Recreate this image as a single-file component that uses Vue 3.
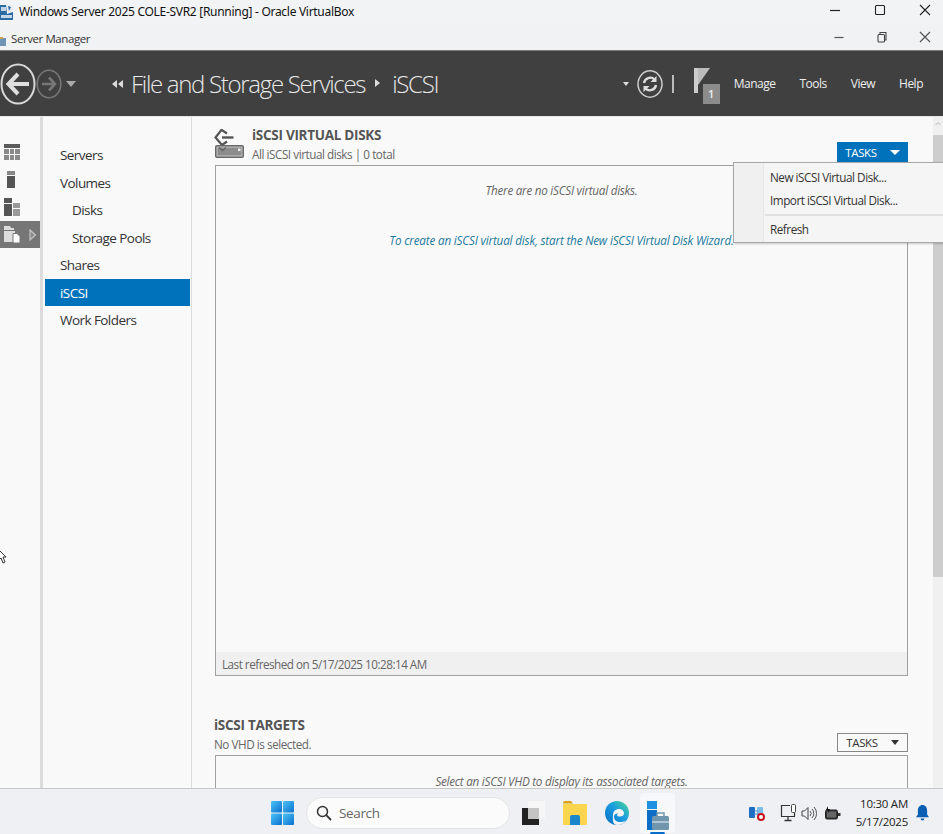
<script setup>
const nav = [
  { label: 'Servers' },
  { label: 'Volumes' },
  { label: 'Disks', sub: true },
  { label: 'Storage Pools', sub: true },
  { label: 'Shares' },
  { label: 'iSCSI', active: true },
  { label: 'Work Folders' },
]
</script>

<template>
  <div class="screen">
    <div class="titlebar">
      <svg class="vbox" width="13" height="15" viewBox="0 0 13 15">
        <rect x="0" y="0" width="13" height="15" fill="#2b6aa3" />
        <path d="M6 0h7v7L7 9z" fill="#e8eef5" />
        <path d="M1 2h5v4H1zM1 10h11v3H1z" fill="#c3d6e8" />
        <path d="M8 1l3 1-2 4z" fill="#2b6aa3" />
      </svg>
      <span class="title-text">Windows Server 2025 COLE-SVR2 [Running] - Oracle VirtualBox</span>
      <div class="win-controls outer">
        <svg width="14" height="14" viewBox="0 0 14 14"><path d="M2 7.500h10" stroke="#222" stroke-width="1.200" /></svg>
        <svg width="14" height="14" viewBox="0 0 14 14"><rect x="2.500" y="2.500" width="9" height="9" rx="1" fill="none" stroke="#222" stroke-width="1.100" /></svg>
        <svg width="14" height="14" viewBox="0 0 14 14"><path d="M2 2l10 10M12 2 2 12" stroke="#222" stroke-width="1.100" /></svg>
      </div>
    </div>
    <div class="appbar">
      <svg class="sm-mini" width="6" height="9" viewBox="0 0 6 9"><rect x="0" y="1" width="6" height="8" fill="#6e93b3" /><rect x="0" y="0" width="3" height="2" fill="#c9a24a" /></svg>
      <span class="app-name">Server Manager</span>
      <div class="win-controls inner">
        <svg width="14" height="14" viewBox="0 0 14 14"><path d="M2.500 7.500h9" stroke="#555" stroke-width="1.200" /></svg>
        <svg width="14" height="14" viewBox="0 0 14 14"><rect x="3" y="4.500" width="6.500" height="7.500" rx="1" fill="none" stroke="#444" stroke-width="1.100" /><path d="M5 4.500V2.500h6v7.500H9.500" fill="none" stroke="#444" stroke-width="1.100" /></svg>
        <svg width="14" height="14" viewBox="0 0 14 14"><path d="M2 2l10 10M12 2 2 12" stroke="#555" stroke-width="1.200" /></svg>
      </div>
    </div>

    <header class="header">
      <svg class="nav-back" width="36" height="42" viewBox="0 0 36 42">
        <ellipse cx="18" cy="21" rx="16.500" ry="19.500" fill="none" stroke="#d8d8d8" stroke-width="2" />
        <path d="M8 21h21M18 11 8.500 21l9.500 10" fill="none" stroke="#dedede" stroke-width="4" />
      </svg>
      <svg class="nav-fwd" width="26" height="30" viewBox="0 0 26 30">
        <ellipse cx="13" cy="15" rx="11.800" ry="13.800" fill="none" stroke="#777" stroke-width="1.600" />
        <path d="M6 15h13M13 8.500l6 6.500-6 6.500" fill="none" stroke="#777" stroke-width="2.600" />
      </svg>
      <span class="tri-down hist"></span>
      <span class="crumb-back">
        <i class="tri-left"></i><i class="tri-left"></i>
      </span>
      <span class="crumb">File and Storage Services</span>
      <i class="tri-right"></i>
      <span class="crumb">iSCSI</span>
      <div class="header-right">
        <span class="tri-down small"></span>
        <svg class="refresh" width="26" height="28" viewBox="0 0 26 28">
          <ellipse cx="13" cy="14" rx="12" ry="13.200" fill="none" stroke="#ccc" stroke-width="1.500" />
          <path d="M7 13a6.200 6.200 0 0 1 10.500-3.500M19 15a6.200 6.200 0 0 1-10.500 3.500" fill="none" stroke="#ddd" stroke-width="2.400" />
          <path d="M19.500 6v6h-6zM6.500 22v-6h6z" fill="#ddd" />
        </svg>
        <span class="divider"></span>
        <div class="flag">
          <svg width="16" height="26" viewBox="0 0 16 26"><rect x="0" y="0" width="4" height="25" fill="#ccc" /><path d="M4 0h12L4 17z" fill="#bbb" /></svg>
          <span class="flag-badge">1</span>
        </div>
        <nav class="menu">
          <span>Manage</span><span>Tools</span><span>View</span><span>Help</span>
        </nav>
      </div>
    </header>

    <div class="body">
      <aside class="rail">
        <div class="rail-item">
          <svg width="16" height="16" viewBox="0 0 16 16"><rect width="16" height="16" fill="#8a8a8a" /><rect width="16" height="4" fill="#5c5c5c" /><path d="M0 4.500h16M5.500 5v11M10.500 5v11M0 10.500h16" stroke="#f9f9f9" stroke-width="1" /></svg>
        </div>
        <div class="rail-item">
          <svg width="16" height="17" viewBox="0 0 16 17"><rect x="3" y="0" width="8" height="4" fill="#888" /><rect x="3" y="5" width="8" height="12" fill="#555" /></svg>
        </div>
        <div class="rail-item">
          <svg width="16" height="18" viewBox="0 0 16 18"><rect x="0" y="0" width="8" height="5" fill="#555" /><rect x="0" y="6" width="8" height="12" fill="#555" /><rect x="9" y="5" width="7" height="5" fill="#999" /><rect x="9" y="11" width="7" height="7" fill="#999" /></svg>
        </div>
        <div class="rail-item current">
          <svg width="16" height="17" viewBox="0 0 16 17"><path d="M0 0h6l1 2h3v2H0z" fill="#ddd" /><rect x="0" y="5" width="11" height="11" fill="#ddd" /><path d="M9 7.500h4l3 3v6.500H9z" fill="#fff" stroke="#767676" stroke-width="1" /></svg>
          <svg class="rail-arrow" width="8" height="12" viewBox="0 0 8 12"><path d="M1 1l5.500 5L1 11z" fill="#8c8c8c" stroke="#c4c4c4" stroke-width="1.200" /></svg>
        </div>
      </aside>
      <nav class="sidenav">
        <div v-for="item in nav" :key="item.label" class="nav-row" :class="{ sub: item.sub, active: item.active }">{{ item.label }}</div>
      </nav>

      <main class="main">
        <div class="scroll-content">
          <section class="section first">
            <div class="sec-head">
              <svg class="sec-icon" width="31" height="30" viewBox="0 0 31 30">
                <path d="M13 4.500 7.500 0.800 1.500 8.500 8 16 13 12.500" fill="none" stroke="#555" stroke-width="2.200" />
                <path d="M8 8.500H19.500" fill="none" stroke="#555" stroke-width="2.400" />
                <path d="M1 18a2 2 0 0 1 2-2h25a2 2 0 0 1 2 2v9a2 2 0 0 1-2 2H3a2 2 0 0 1-2-2z" fill="#666" />
                <rect x="3" y="18" width="25" height="9" fill="#8c8c8c" stroke="#c8c8c8" stroke-width="1" />
                <rect x="24" y="19.500" width="2.500" height="2.500" fill="#eee" />
                <path d="M5 18.500 8.500 21.500 12 18.500" fill="none" stroke="#666" stroke-width="1.400" />
              </svg>
              <div class="sec-titles">
                <h2>iSCSI VIRTUAL DISKS</h2>
                <p>All iSCSI virtual disks | 0 total</p>
              </div>
              <button class="tasks primary">TASKS <i class="tri-down white"></i></button>
            </div>
            <div class="panel tall">
              <div class="panel-body">
                <p class="empty">There are no iSCSI virtual disks.</p>
                <p class="link">To create an iSCSI virtual disk, start the New iSCSI Virtual Disk Wizard.</p>
              </div>
              <div class="panel-foot">Last refreshed on 5/17/2025 10:28:14 AM</div>
            </div>
          </section>

          <section class="section second">
            <div class="sec-head plain">
              <div class="sec-titles">
                <h2>iSCSI TARGETS</h2>
                <p>No VHD is selected.</p>
              </div>
              <button class="tasks">TASKS <i class="tri-down dark"></i></button>
            </div>
            <div class="panel short">
              <p class="empty">Select an iSCSI VHD to display its associated targets.</p>
            </div>
          </section>
        </div>
        <div class="scrollbar">
          <svg width="10" height="12" viewBox="0 0 10 12"><path d="M2.500 8 5 5.500 7.500 8" fill="none" stroke="#bbb" /></svg>
          <div class="thumb"></div>
        </div>
      </main>

      <div class="popup">
        <div class="pop-row">New iSCSI Virtual Disk...</div>
        <div class="pop-row">Import iSCSI Virtual Disk...</div>
        <div class="pop-sep"></div>
        <div class="pop-row">Refresh</div>
      </div>

      <svg class="cursor" width="8" height="18" viewBox="0 0 8 18">
        <path d="M-2 0 6 8H3l2 5-2 1-2-5-3 3z" fill="#fff" stroke="#333" stroke-width="1" />
      </svg>
    </div>

    <footer class="taskbar">
      <div class="task-center">
        <svg width="23" height="24" viewBox="0 0 23 24">
          <defs>
            <linearGradient id="win" x1="0" y1="0" x2="1" y2="1"><stop offset="0" stop-color="#4cc4f5" /><stop offset="1" stop-color="#0a70d0" /></linearGradient>
          </defs>
          <rect x="0" y="0" width="11" height="11.500" rx="1" fill="url(#win)" />
          <rect x="12" y="0" width="11" height="11.500" rx="1" fill="url(#win)" />
          <rect x="0" y="12.500" width="11" height="11.500" rx="1" fill="url(#win)" />
          <rect x="12" y="12.500" width="11" height="11.500" rx="1" fill="url(#win)" />
        </svg>
        <div class="search">
          <svg width="16" height="16" viewBox="0 0 16 16"><circle cx="6.500" cy="6.500" r="5" fill="none" stroke="#333" stroke-width="1.500" /><path d="M10.200 10.200 15 15" stroke="#333" stroke-width="1.800" /></svg>
          <span>Search</span>
        </div>
        <svg class="tv" width="24" height="24" viewBox="0 0 24 24">
          <rect x="6" y="0" width="17" height="17" fill="#f6f6f6" />
          <rect x="0" y="7" width="17" height="17" fill="#222" />
          <rect x="6" y="7" width="11" height="11" fill="#c4c4c4" />
        </svg>
        <svg class="folder" width="24" height="24" viewBox="0 0 24 24">
          <path d="M0 2a2 2 0 0 1 2-2h6l2 2.500H0z" fill="#d9a213" />
          <rect x="0" y="3" width="24" height="21" rx="1" fill="#fcd54f" />
          <path d="M7 16a2 2 0 0 1 2-2h6a2 2 0 0 1 2 2v8H7z" fill="#1b86c9" />
        </svg>
        <svg class="edge" width="24" height="24" viewBox="0 0 24 24">
          <defs>
            <linearGradient id="edgeg" x1="0" y1="1" x2="1" y2="0"><stop offset="0" stop-color="#0a6cc4" /><stop offset="0.550" stop-color="#1b9de2" /><stop offset="1" stop-color="#4fdc8a" /></linearGradient>
          </defs>
          <circle cx="12" cy="12" r="12" fill="url(#edgeg)" />
          <path d="M8 14c0-4 3-6 6-6s5 2 5 4.500c0 2-2 3-4 3-1.500 0-3-.5-3-1.500 0-.7 1-1 1.500-1.500-2.500-.5-4.500.5-4.500 3.500 0 3 3 5 6 5 2 0 4-.5 5.500-1.500-1.500 3-5 4.500-8 4.500C7 24 8 18 8 14z" fill="#f2f3f5" />
        </svg>
        <div class="sm-task">
          <svg width="22" height="30" viewBox="0 0 22 30">
            <rect x="0" y="0" width="10" height="8" fill="#1f8fe0" />
            <rect x="0" y="9" width="10" height="20" fill="#0f6fc6" />
            <rect x="5" y="15" width="17" height="14" rx="1.500" fill="#6f96ad" />
            <path d="M10 15v-3h7v3" fill="none" stroke="#6f96ad" stroke-width="1.500" />
            <path d="M5 21h17" stroke="#dce6ec" stroke-width="1.200" />
          </svg>
          <span class="running"></span>
        </div>
      </div>
      <div class="tray">
        <svg width="16" height="15" viewBox="0 0 16 15">
          <rect x="0" y="1" width="6" height="11" rx="1" fill="#1e6fc4" />
          <rect x="8" y="1" width="6" height="11" rx="1" fill="#7fbbe8" />
          <path d="M5 5h4M5 8h4" stroke="#4a8fcf" />
          <circle cx="12" cy="11" r="3" fill="#fff" stroke="#c8141c" stroke-width="2" />
        </svg>
        <svg class="net" width="16" height="18" viewBox="0 0 16 18">
          <path d="M10 1.500H1.500v11h13V9" fill="none" stroke="#333" stroke-width="1.200" />
          <path d="M8 13v3M4.500 16.500h7" stroke="#333" stroke-width="1.300" />
          <rect x="11.500" y="0.500" width="4" height="8" rx="1" fill="#fff" stroke="#444" />
        </svg>
        <svg class="vol" width="16" height="15" viewBox="0 0 16 15">
          <path d="M1 5h2.500L7 1.500v12L3.500 10H1z" fill="none" stroke="#444" />
          <path d="M9 5a3.500 3.500 0 0 1 0 5M11 3a6.500 6.500 0 0 1 0 9M13 1a9.500 9.500 0 0 1 0 13" fill="none" stroke="#555" />
        </svg>
        <svg class="bat" width="17" height="15" viewBox="0 0 17 15">
          <rect x="1.500" y="4" width="12" height="9" rx="1.500" fill="#333" stroke="#222" />
          <rect x="3" y="5.500" width="9" height="6" fill="#666" />
          <rect x="14" y="7" width="2.500" height="3" fill="#333" />
          <path d="M4 0 2 4h2v3l2-4H4z" fill="#111" />
        </svg>
        <div class="clock"><span>10:30 AM</span><span>5/17/2025</span></div>
        <svg class="bell" width="13" height="16" viewBox="0 0 14 17">
          <path d="M7 0c3 0 5 2.500 5 6v4l2 3H0l2-3V6c0-3.500 2-6 5-6z" fill="#0a5fb4" />
          <path d="M5 14.500h4a2 2 0 0 1-4 0z" fill="#0a5fb4" />
        </svg>
      </div>
    </footer>
  </div>
</template>

<style>
html, body { margin: 0; padding: 0; overflow: hidden; }
</style>

<style scoped>
.screen {
  width: 943px;
  height: 834px;
  display: flex;
  flex-direction: column;
  overflow: hidden;
  background: #f9f9f9;
  font-family: "Open Sans", "Noto Sans", sans-serif;
  color: #333;
}
.titlebar {
  height: 25px;
  flex: none;
  display: flex;
  align-items: center;
  background: #f1f3f5;
  position: relative;
}
.vbox { margin-right: 6px; flex: none; margin-top: 0; }
.title-text {
  font-family: "Noto Sans", sans-serif;
  font-size: 12px;
  color: #111;
  white-space: nowrap;
  letter-spacing: -0.29px;
  margin-top: -3px;
}
.appbar {
  height: 26px;
  flex: none;
  display: flex;
  align-items: center;
  background: #f1f2f3;
  border-bottom: 1px solid #7a7a7a;
  box-sizing: border-box;
}
.sm-mini { margin-right: 5px; margin-top: 7px; flex: none; }
.app-name { font-size: 11.500px; letter-spacing: -0.42px; color: #333; margin-top: 2px; }
.win-controls { margin-left: auto; display: flex; align-items: center; }
.win-controls.outer { gap: 31px; margin-right: 11px; margin-top: -5px; }
.win-controls.inner { gap: 29px; margin-right: 11px; margin-top: -1px; }

.header {
  height: 66px;
  flex: none;
  background: #404040;
  border-bottom: 1px solid #e8e8e8;
  box-sizing: border-box;
  display: flex;
  align-items: center;
  color: #eee;
}
.nav-back { flex: none; }
.nav-fwd { flex: none; margin-left: 0; }
.tri-down {
  display: inline-block;
  width: 0;
  height: 0;
  border-left: 5px solid transparent;
  border-right: 5px solid transparent;
  border-top: 6px solid #bbb;
}
.tri-down.hist { margin-left: 4px; border-top-color: #aaa; }
.crumb-back { display: inline-flex; margin-left: 36px; margin-right: 8px; gap: 1px; }
.tri-left {
  width: 0; height: 0;
  border-top: 4px solid transparent;
  border-bottom: 4px solid transparent;
  border-right: 5px solid #ddd;
}
.tri-right {
  width: 0; height: 0;
  border-top: 4px solid transparent;
  border-bottom: 4px solid transparent;
  border-left: 5px solid #ddd;
  margin: -2px 12px 0 10px;
}
.crumb { font-size: 24px; letter-spacing: -1.3px; font-weight: 300; color: #e8e8e8; white-space: nowrap; margin-top: -1px; }
.header-right { margin-left: auto; display: flex; align-items: center; }
.tri-down.small { border-left-width: 3.500px; border-right-width: 3.500px; border-top-width: 4px; border-top-color: #ddd; margin-right: 8px; }
.refresh { flex: none; }
.divider { width: 2px; height: 18px; background: #bbb; margin: 0 20px 0 9px; }
.flag { position: relative; width: 26px; height: 36px; margin-right: 14px; margin-top: 4px; }
.flag svg { position: absolute; left: 0; top: 0; }
.flag-badge {
  position: absolute;
  right: 0;
  bottom: 0;
  width: 17px;
  height: 20px;
  background: #8c8c8c;
  color: #eee;
  font-size: 11px;
  font-weight: 600;
  text-align: center;
  line-height: 20px;
}
.menu { display: flex; gap: 24px; margin-right: 20px; font-size: 12px; letter-spacing: -0.5px; color: #eee; }

.body { flex: 1; display: flex; min-height: 0; position: relative; background: #f9f9f9; }
.rail {
  width: 43px;
  flex: none;
  box-sizing: border-box;
  border-right: 3px solid #dcdcdc;
  padding-top: 21px;
  display: flex;
  flex-direction: column;
}
.rail-item { height: 27.500px; display: flex; align-items: center; padding-left: 4px; }
.rail-item.current { background: #767676; position: relative; width: 40px; box-sizing: border-box; }
.rail-arrow { position: absolute; left: 29px; top: 8px; }
.sidenav {
  width: 149px;
  flex: none;
  box-sizing: border-box;
  border-right: 1px solid #dcdcdc;
  padding: 24px 1px 0 2px;
}
.nav-row {
  height: 27.500px;
  line-height: 29.500px;
  padding-left: 15px;
  font-size: 13.500px;
  letter-spacing: -0.56px;
  color: #333;
  white-space: nowrap;
}
.nav-row.sub { padding-left: 27px; }
.nav-row.active { background: #0072bc; color: #fff; }
.main { flex: 1; min-width: 0; display: flex; }
.scroll-content { flex: 1; min-width: 0; padding: 0 25px 0 23px; overflow: hidden; }
.section.first { padding-top: 11px; }
.sec-head { display: flex; align-items: flex-end; height: 37px; position: relative; }
.sec-icon { position: absolute; left: -1px; top: 1px; }
.sec-titles { margin-left: 37px; }
.sec-head.plain .sec-titles { margin-left: -1px; }
.sec-titles h2 { margin: 0; font-size: 13.500px; line-height: 16px; font-weight: 700; letter-spacing: -0.28px; color: #555; }
.sec-titles p { margin: 4px 0 3px; font-size: 11.700px; line-height: 15px; letter-spacing: -0.45px; color: #666; }
.tasks {
  margin-left: auto;
  width: 71px;
  height: 19px;
  box-sizing: border-box;
  border: 1px solid #888;
  background: #f9f9f9;
  color: #333;
  font-family: inherit;
  font-size: 11.500px;
  letter-spacing: -0.35px;
  padding: 0;
  display: flex;
  align-items: center;
  justify-content: center;
  gap: 13px;
  margin-bottom: 3px;
}
.tasks.primary { background: #0072bc; border-color: #0072bc; color: #fff; height: 20px; padding-top: 1px; }
.tri-down.white { border-top-color: #fff; border-top-width: 5px; }
.tri-down.dark { border-top-color: #333; border-left-width: 4px; border-right-width: 4px; border-top-width: 5px; }
.panel { border: 1px solid #a0a0a0; box-sizing: border-box; background: #f9f9f9; }
.panel.tall { height: 511px; display: flex; flex-direction: column; }
.panel-body { flex: 1; text-align: center; padding-top: 16px; }
.empty { margin: 0; font-size: 11.700px; line-height: 16px; font-style: italic; color: #666; letter-spacing: -0.26px; text-align: center; }
.link { margin: 34px 0 0; font-size: 11.700px; line-height: 16px; font-style: italic; color: #1a7a9e; letter-spacing: -0.18px; }
.panel-foot {
  height: 23px;
  line-height: 24px;
  background: #f0f0f0;
  padding-left: 6px;
  font-size: 11.700px;
  letter-spacing: -0.5px;
  color: #666;
}
.section.second { margin-top: 40px; }
.sec-head.plain { height: 39px; }
.panel.short { height: 60px; padding-top: 17px; }
.scrollbar { width: 10px; flex: none; background: #f0f0f0; display: flex; flex-direction: column; }
.thumb { width: 10px; height: 442px; margin-top: 6px; background: #cdcdcd; }
.popup {
  position: absolute;
  left: 733px;
  top: 45px;
  width: 215px;
  height: 81px;
  box-sizing: border-box;
  border: 1px solid #a8a8a8;
  padding: 3px 0 0 32px;
  box-shadow: 1px 1px 2px rgba(0,0,0,0.2);
  background: linear-gradient(to right, #f0f0f0 29px, #e6e6e6 29px, #e6e6e6 30px, #f5f5f5 30px);
}
.pop-row { height: 23px; line-height: 23px; padding-left: 4px; font-size: 11.700px; letter-spacing: -0.46px; color: #333; white-space: nowrap; }
.pop-sep { height: 2px; background: #e0e0e0; margin: 2px 0 2px -1px; }
.cursor { position: absolute; left: 0; top: 432px; }

.taskbar {
  height: 46px;
  flex: none;
  box-sizing: border-box;
  background: #eef0f3;
  border-top: 1px solid #c8c8c8;
  position: relative;
  display: flex;
  align-items: center;
  justify-content: flex-end;
}
.task-center {
  position: absolute;
  left: 271px;
  top: 0;
  height: 48px;
  display: flex;
  align-items: center;
}
.search {
  width: 204px;
  height: 32px;
  margin-left: 12px;
  box-sizing: border-box;
  border-radius: 16px;
  background: #fbfbfb;
  border: 1px solid #e4e4e4;
  display: flex;
  align-items: center;
  padding-left: 9px;
  gap: 7px;
}
.search span { font-size: 13.500px; color: #666; letter-spacing: -0.35px; }
.tv { margin-left: 12px; }
.folder { margin-left: 17px; }
.edge { margin-left: 18px; }
.sm-task {
  width: 35px;
  height: 40px;
  margin-left: 11px;
  background: #f7f8f9;
  border-radius: 4px;
  display: flex;
  justify-content: center;
  padding-top: 8px;
  box-sizing: border-box;
  position: relative;
  margin-top: 0;
}
.running { position: absolute; left: 10px; bottom: -2px; width: 15px; height: 3px; background: #0a6cc9; border-radius: 2px; }
.tray { display: flex; align-items: center; margin-right: 14px; margin-top: 3px; }
.net { margin-left: 15px; }
.vol { margin-left: 5px; }
.bat { margin-left: 7px; }
.clock {
  display: flex;
  flex-direction: column;
  align-items: flex-end;
  margin-left: 15px;
  font-size: 11.500px;
  line-height: 18px;
  color: #222;
  letter-spacing: -0.25px;
}
.bell { margin-left: 8px; }
</style>
